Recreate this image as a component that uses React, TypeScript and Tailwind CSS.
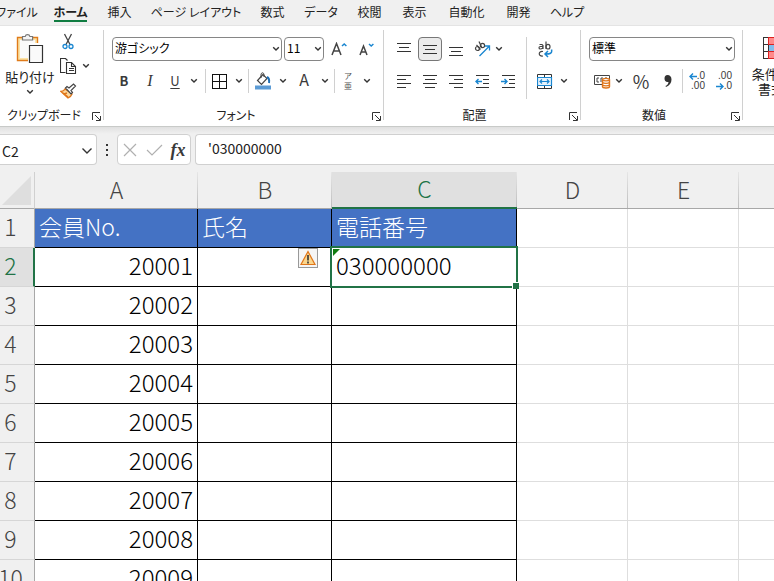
import type { ReactNode } from "react";

const palt = "[font-feature-settings:'palt']";

const tabs = [
  { name: "ファイル", size: "w-[34px]" },
  { name: "ホーム", size: "w-[33px]" },
  { name: "挿入", size: "w-[25px]" },
  { name: "ページ レイアウト", size: "w-[88px]" },
  { name: "数式", size: "w-[25px]" },
  { name: "データ", size: "w-[32px]" },
  { name: "校閲", size: "w-[25px]" },
  { name: "表示", size: "w-[25px]" },
  { name: "自動化", size: "w-[39px]" },
  { name: "開発", size: "w-[25px]" },
  { name: "ヘルプ", size: "w-[32px]" },
];

const members = [20001, 20002, 20003, 20004, 20005, 20006, 20007, 20008, 20009];

function Chevron({ className = "" }: { className?: string }) {
  return (
    <svg viewBox="0 0 8 6" className={`h-[6px] w-[8px] shrink-0 ${className}`} fill="none" stroke="#333" strokeWidth="1.4">
      <path d="M1.2 1.2 4 4l2.8-2.8" />
    </svg>
  );
}

function Tool({ label, className = "w-[26px]", children }: { label: string; className?: string; children: ReactNode }) {
  return (
    <button type="button" aria-label={label} className={`flex h-6 shrink-0 items-center justify-center text-[#3a3a3a] ${className}`}>
      {children}
    </button>
  );
}

function Divider() {
  return <div className="h-6 w-px shrink-0 bg-[#d0d0d0]" />;
}

function Picker({ label, value, className }: { label: string; value: string; className: string }) {
  return (
    <div className={`relative h-6 shrink-0 ${className}`}>
      <select
        aria-label={label}
        className={`block h-full w-full appearance-none rounded border border-[#868686] bg-white pb-[2px] pl-[2px] text-xs leading-4 text-black ${palt}`}
      >
        <option>{value}</option>
      </select>
      <Chevron className="pointer-events-none absolute top-[9px] right-[2px]" />
    </div>
  );
}

function Launcher({ label }: { label: string }) {
  return (
    <button type="button" aria-label={label} className="absolute right-[3px] bottom-[5px] size-[9px]">
      <svg viewBox="0 0 9 9" className="block size-[9px]" fill="none" stroke="#333" strokeWidth="1">
        <path d="M.5 8V.5H8M3 3l5 5M8.500 4v4.500H4" />
      </svg>
    </button>
  );
}

function Group({ title, className, children }: { title: string; className: string; children: ReactNode }) {
  return (
    <section className={`relative flex h-[100px] shrink-0 flex-col ${className}`}>
      <div className="h-[79px]">{children}</div>
      <h2 className={`pr-4 text-center text-xs leading-5 text-[#222] ${palt}`}>{title}</h2>
      <Launcher label={`${title}の設定`} />
      <div className="absolute top-1 right-0 h-[90px] w-px bg-[#d0d0d0]" />
    </section>
  );
}

function Lines({ rows }: { rows: [number, number, number][] }) {
  return (
    <svg viewBox="0 0 14 14" className="size-[14px]" shapeRendering="crispEdges" stroke="#333" strokeWidth="1">
      {rows.map(([x1, x2, y]) => (
        <path key={y} d={`M${x1} ${y + 0.5}H${x2}`} />
      ))}
    </svg>
  );
}

function Indent({ out }: { out?: boolean }) {
  return (
    <svg viewBox="0 0 15 14" className="h-[14px] w-[15px]" fill="none" stroke="#333">
      <path d="M1 1.500h13M8 5.500h6M8 9.500h6M1 13.500h13" shapeRendering="crispEdges" />
      <path d={out ? "M7 7.500H1M3.500 5 1 7.500 3.500 10" : "M0 7.500h6M3.500 5 6 7.500 3.500 10"} stroke="#1a86d0" strokeWidth="1.400" />
    </svg>
  );
}

function PasteIcon() {
  return (
    <svg viewBox="0 0 28 32" className="h-8 w-7" fill="none">
      <path d="M1.500 5.500h20v23h-20z" fill="#fbe3a6" stroke="#e07b1a" strokeWidth="1.400" />
      <path d="M4 8h15v18H4z" fill="#fafafa" />
      <path d="M6.500 8V4.500h2.700a2.400 2.400 0 0 1 4.700 0h2.700V8z" fill="#f5f5f5" stroke="#777" strokeWidth="1.200" />
      <path d="M12 11h16v20H12z" fill="#fff" />
      <path d="M13.500 13.500h13v17h-13z" fill="#fafafa" stroke="#333" strokeWidth="1.200" />
    </svg>
  );
}

function CutIcon() {
  return (
    <svg viewBox="0 0 12 17" className="h-[17px] w-3" fill="none">
      <path d="M2.500 1 8 11.500M9.500 1 4 11.500" stroke="#444" strokeWidth="1.300" />
      <circle cx="3" cy="13.500" r="2" stroke="#1a86d0" strokeWidth="1.300" />
      <circle cx="9" cy="13.500" r="2" stroke="#1a86d0" strokeWidth="1.300" />
    </svg>
  );
}

function CopyIcon() {
  return (
    <svg viewBox="0 0 17 17" className="size-[17px]" fill="none" stroke="#333" strokeWidth="1.100">
      <path d="M5.500 14.500h-5V.5h5l2 2" />
      <path d="M6.500 4.500h5l4 4v7h-9z" fill="#fff" />
      <path d="M11.500 4.500v4h4M9 10.500h5M9 12.500h5" />
    </svg>
  );
}

function BrushIcon() {
  return (
    <svg viewBox="0 0 17 16" className="h-4 w-[17px]" fill="none">
      <path d="M5 6C4 8 2 8.500 1 8.500L8 15c2-1 3.500-2.500 4-4z" fill="#fbd9a0" stroke="#e0761a" strokeWidth="1.300" />
      <path d="m3 10 5 4M7 10l-3 1" stroke="#e0761a" strokeWidth="1.600" />
      <path d="m5.500 5 1.500-1.500 2 1.500 4.500-4 2 2-4.500 4.500 1.500 2L11 11z" fill="#fff" stroke="#444" strokeWidth="1.200" />
    </svg>
  );
}

function BordersIcon() {
  return (
    <svg viewBox="0 0 15 15" className="size-[15px]" fill="none" stroke="#111" shapeRendering="crispEdges">
      <path d="M.5.5h14v14H.5zM7.500.5v14M.5 7.500h14" />
    </svg>
  );
}

function FillIcon() {
  return (
    <svg viewBox="0 0 16 18" className="h-[18px] w-4" fill="none">
      <path d="M8 2.500 2.500 8.500l4 4 5.500-6z" stroke="#444" strokeWidth="1.200" />
      <path d="M6 6V3c0-3 3-3 3 0v2" stroke="#444" />
      <path d="M12 5c2 1 2.500 3 2 6" stroke="#1f6fb5" strokeWidth="2" />
      <path d="M0 13.500h16V17.500H0z" fill="#5b9bd5" />
    </svg>
  );
}

function FontSize({ up }: { up?: boolean }) {
  return (
    <svg viewBox="0 0 16 14" className="h-[14px] w-4" fill="none">
      {up ? (
        <path d="M1 13 5.500 1.500 10 13M2.500 9h6" stroke="#444" strokeWidth="1.500" />
      ) : (
        <path d="M2 13 5.500 4 9 13M3 10h5" stroke="#444" strokeWidth="1.500" />
      )}
      <path d={up ? "m11 4 2.200-2 2.200 2" : "m11 2 2.200 2 2.200-2"} stroke="#1a86d0" strokeWidth="1.500" />
    </svg>
  );
}

function RotateIcon() {
  return (
    <svg viewBox="0 0 17 16" className="h-4 w-[17px]" fill="none">
      <g stroke="#444" strokeWidth="1.200">
        <circle cx="3.500" cy="7.500" r="2" />
        <path d="m2.500 4 4 4.500" />
        <circle cx="8.500" cy="4.500" r="2.100" />
        <path d="M5 .5 8 7" />
      </g>
      <path d="M5.500 15 15 5.500M11 5h4.500v4.500" stroke="#1a86d0" strokeWidth="1.300" />
    </svg>
  );
}

function WrapIcon() {
  return (
    <svg viewBox="0 0 15 17" className="h-[17px] w-[15px]" fill="none" strokeWidth="1.200">
      <g stroke="#444">
        <path d="M1.500 3.500h2.500l1 1V8M5 5.500H2.500C.5 5.500.5 8 2.500 8 4 8 5 7 5 6M8 .5V8" />
        <ellipse cx="10" cy="5.700" rx="2" ry="2.300" />
        <path d="M5 10.500c-5-1-5 5.500 0 4.500" />
      </g>
      <path d="M13.500 8.500c1 4-1.500 4.500-6 4.500M10 10l-3 3 3 3" stroke="#1a86d0" strokeWidth="1.500" />
    </svg>
  );
}

function MergeIcon() {
  return (
    <svg viewBox="0 0 16 15" className="h-[15px] w-4" fill="none">
      <path d="M.5.5h14v14H.5zM7.500.5v14" stroke="#333" />
      <path d="M.5 3.500h14v8H.5z" fill="#e8f3fc" stroke="#1a86d0" strokeWidth="1.200" />
      <path d="M3 7.500h9M5 5.500l-2 2 2 2M10 5.500l2 2-2 2" stroke="#1a86d0" strokeWidth="1.200" />
    </svg>
  );
}

function CurrencyIcon() {
  return (
    <svg viewBox="0 0 17 15" className="h-[15px] w-[17px]" fill="none">
      <path d="M.5 1.500h15v9H.5z" stroke="#444" />
      <path d="M5 4H3v4h2M7 8V4h2M11 6V4h2" stroke="#444" />
      <path d="M8.500 5.500c0-1.500 7-1.500 7 0v7c0 2-7 2-7 0z" fill="#fff" stroke="#e0761a" strokeWidth="1.400" />
      <path d="M8.500 6c1 1.200 6 1.200 7 0M8.500 8.500c1 1.200 6 1.200 7 0M8.500 11c1 1.200 6 1.200 7 0" stroke="#e0761a" strokeWidth="1.300" />
    </svg>
  );
}

function Decimals({ add }: { add?: boolean }) {
  return (
    <span className="relative flex h-5 w-4 flex-col items-end font-['Liberation_Sans',sans-serif] text-[10px] leading-[10px]">
      <span>{add ? ".0" : ".00"}</span>
      <span>{add ? ".00" : ".0"}</span>
      <svg
        viewBox="0 0 8 7"
        className={`absolute left-0 h-[7px] w-2 ${add ? "top-[2px]" : "bottom-[1px]"}`}
        fill="none"
        stroke="#1a86d0"
        strokeWidth="1.400"
      >
        <path d={add ? "M8 3.500H1M4 .5l-3 3 3 3" : "M0 3.500h7M4 .5l3 3-3 3"} />
      </svg>
    </span>
  );
}

function ConditionalIcon() {
  return (
    <svg viewBox="0 0 28 22" className="h-[22px] w-7" fill="none" shapeRendering="crispEdges">
      <path d="M5 1h14v6H5zM5 15h14v6H5z" fill="#ff8b8b" />
      <path d="M5 7h18v8H5z" fill="#83beec" />
      <path d="M.5.5h27v21H.5zM.5 7.500h27M.5 14.500h27M5.500.5v21" stroke="#333" />
      <path d="M5.500.5h14v7h-14zM5.500 14.500h14v7h-14z" stroke="#d22" />
    </svg>
  );
}

function Ribbon() {
  return (
    <div className="flex h-[102px] overflow-hidden border-t border-b border-t-[#e4e4e4] border-b-[#c8cac8] bg-white">
      <Group title="クリップボード" className="w-[104px]">
        <div className="flex pt-[3px]">
          <button type="button" className={`flex w-[60px] flex-col items-center pt-[3px] text-[13px] leading-[18px] text-[#222] ${palt}`}>
            <PasteIcon />
            <span className="pt-1">貼り付け</span>
            <Chevron className="mt-[3px]" />
          </button>
          <div className="flex flex-col">
            <Tool label="切り取り" className="w-4"><CutIcon /></Tool>
            <div className="flex h-[26px] items-center">
              <Tool label="コピー" className="w-[17px]"><CopyIcon /></Tool>
              <Tool label="コピーのオプション" className="ml-[5px] w-2"><Chevron /></Tool>
            </div>
            <Tool label="書式のコピー" className="w-[17px]"><BrushIcon /></Tool>
          </div>
        </div>
      </Group>

      <Group title="フォント" className="w-[280px]">
        <div className="flex gap-[2px] pt-[11px] pl-2">
          <Picker label="フォント名" value="游ゴシック" className="w-[170px]" />
          <Picker label="フォント サイズ" value="11" className="w-10" />
          <Tool label="フォント サイズの拡大"><FontSize up /></Tool>
          <Tool label="フォント サイズの縮小" className="w-6"><FontSize /></Tool>
        </div>
        <div className="flex items-center pt-2 pl-[7px]">
          <Tool label="太字"><span className="text-[13px] leading-6 font-bold">B</span></Tool>
          <Tool label="斜体"><span className="font-['Liberation_Serif',serif] text-base italic">I</span></Tool>
          <Tool label="下線" className="w-6"><span className="text-[13px] leading-6 underline underline-offset-2">U</span></Tool>
          <Tool label="下線の種類" className="w-[18px] pr-1"><Chevron /></Tool>
          <Divider />
          <Tool label="罫線" className="w-[27px]"><BordersIcon /></Tool>
          <Tool label="罫線の種類" className="w-[15px] pr-1"><Chevron /></Tool>
          <Divider />
          <Tool label="塗りつぶしの色" className="w-7"><FillIcon /></Tool>
          <Tool label="塗りつぶしの色の選択" className="w-3"><Chevron /></Tool>
          <Tool label="フォントの色" className="w-[30px] pb-1"><span className="text-base leading-5">A</span></Tool>
          <Tool label="フォントの色の選択" className="w-[15px] pr-1"><Chevron /></Tool>
          <Divider />
          <Tool label="ふりがなの表示">
            <span className="flex flex-col items-center text-[8px] leading-[10px] text-[#555]"><span>ア</span><span>亜</span></span>
          </Tool>
          <Tool label="ふりがなの設定" className="w-3"><Chevron /></Tool>
        </div>
      </Group>

      <Group title="配置" className="w-[197px]">
        <div className="flex pt-[11px] pl-[7px]">
          <div className="flex w-[135px] flex-col gap-2">
            <div className="flex">
              <Tool label="上揃え"><Lines rows={[[0, 14, 1], [2, 12, 5], [0, 14, 9]]} /></Tool>
              <button type="button" aria-label="上下中央揃え" aria-pressed="true" className="mx-px flex size-6 items-center justify-center rounded border border-[#777] bg-[#ebebeb]">
                <Lines rows={[[0, 14, 3], [2, 12, 7], [0, 14, 11]]} />
              </button>
              <Tool label="下揃え"><Lines rows={[[0, 14, 5], [2, 12, 9], [0, 14, 13]]} /></Tool>
              <Tool label="方向"><RotateIcon /></Tool>
              <Tool label="方向の選択" className="w-2"><Chevron /></Tool>
            </div>
            <div className="flex">
              <Tool label="左揃え"><Lines rows={[[0, 14, 1], [0, 9, 5], [0, 14, 9], [0, 9, 13]]} /></Tool>
              <Tool label="中央揃え"><Lines rows={[[0, 14, 1], [2, 12, 5], [0, 14, 9], [2, 12, 13]]} /></Tool>
              <Tool label="右揃え"><Lines rows={[[0, 14, 1], [5, 14, 5], [0, 14, 9], [5, 14, 13]]} /></Tool>
              <Tool label="インデントを減らす"><Indent out /></Tool>
              <Tool label="インデントを増やす"><Indent /></Tool>
            </div>
          </div>
          <div className="h-[62px] w-px bg-[#d0d0d0]" />
          <div className="flex flex-col gap-2 pl-[5px]">
            <Tool label="折り返して全体を表示する"><WrapIcon /></Tool>
            <div className="flex">
              <Tool label="セルを結合して中央揃え"><MergeIcon /></Tool>
              <Tool label="結合の種類" className="w-3"><Chevron /></Tool>
            </div>
          </div>
        </div>
      </Group>

      <Group title="数値" className="w-[162px]">
        <div className="pt-[11px] pl-2">
          <Picker label="表示形式" value="標準" className="w-[146px]" />
        </div>
        <div className="flex items-center pt-2 pl-2">
          <Tool label="通貨表示形式"><CurrencyIcon /></Tool>
          <Tool label="通貨の選択" className="w-2"><Chevron /></Tool>
          <Tool label="パーセント スタイル" className="w-9"><span className="text-lg leading-6">%</span></Tool>
          <Tool label="桁区切りスタイル" className="w-[23px] pr-[5px]">
            <svg viewBox="0 0 8 14" className="h-[14px] w-2" fill="#333"><path d="M3.500 1C5.800 1 7.500 2.500 7.500 5.500 7.500 9 5.500 11.500 2 13l-.5-1c2-1 3-2.500 3-4C2 8.500.5 7 .5 4.500.5 2.500 1.500 1 3.500 1z" /></svg>
          </Tool>
          <Divider />
          <Tool label="小数点以下の表示桁数を増やす" className="w-7"><Decimals add /></Tool>
          <Tool label="小数点以下の表示桁数を減らす"><Decimals /></Tool>
        </div>
      </Group>

      <button type="button" className={`ml-[9px] flex h-20 w-[50px] shrink-0 flex-col items-center pt-[11px] text-[13px] leading-[15px] whitespace-nowrap text-[#222] ${palt}`}>
        <ConditionalIcon />
        <span className="pt-[7px]">条件付き</span>
        <span className="flex items-center gap-1">書式<Chevron /></span>
      </button>
    </div>
  );
}

function FormulaBar() {
  return (
    <div className="flex h-[45px] bg-linear-to-b from-[#e0e0e0] to-[#f0f0f0] to-15% pt-[7px] text-sm text-[#222]">
      <div className="relative h-[31px] w-[97px]">
        <input aria-label="名前ボックス" defaultValue="C2" className="block h-full w-full rounded-r border border-l-0 border-[#d0d0d0] bg-white pt-[2px] pl-[2px]" />
        <svg viewBox="0 0 12 8" className="pointer-events-none absolute top-[13px] right-1 h-2 w-3" fill="none" stroke="#333" strokeWidth="1.400"><path d="m1.500 1.500 4.500 4.500 4.500-4.500" /></svg>
      </div>
      <div className="flex h-[31px] w-5 flex-col items-center justify-center gap-[3px]">
        <i className="size-[2px] bg-[#333]" /><i className="size-[2px] bg-[#333]" /><i className="size-[2px] bg-[#333]" />
      </div>
      <div className="flex h-[31px] w-[74px] items-center rounded border border-[#d0d0d0] bg-white">
        <Tool label="キャンセル" className="w-6">
          <svg viewBox="0 0 14 14" className="size-[14px]" fill="none" stroke="#b0b0b0" strokeWidth="1.200"><path d="m1 1 12 12M13 1 1 13" /></svg>
        </Tool>
        <Tool label="入力" className="w-6">
          <svg viewBox="0 0 17 12" className="h-3 w-[17px]" fill="none" stroke="#b0b0b0" strokeWidth="1.200"><path d="m1 6 5 5L16 1" /></svg>
        </Tool>
        <Tool label="関数の挿入" className="w-6">
          <span className="font-['Liberation_Serif',serif] text-lg leading-6 font-bold italic">fx</span>
        </Tool>
      </div>
      <input
        aria-label="数式バー"
        defaultValue="'030000000"
        className="ml-1 h-[31px] min-w-0 flex-1 rounded-l border border-r-0 border-[#d0d0d0] bg-white pb-1 pl-3"
      />
    </div>
  );
}

const columns = [
  { name: "A", size: "w-[163px]" },
  { name: "B", size: "w-[134px]" },
  { name: "C", size: "w-[185px]" },
  { name: "D", size: "w-[111px]" },
  { name: "E", size: "w-[111px]" },
  { name: "", size: "" },
];

function RowHead({ n, active }: { n: number; active?: boolean }) {
  return (
    <th
      scope="row"
      className={`h-[39px] border-b border-b-[#d6d6d6] p-0 pb-1 font-light ${
        active ? "border-r-2 border-r-[#217346] bg-[#e0e0e0] text-[#217346]" : "border-r border-r-[#a8a8a8] bg-[#f0f0f0] text-[#444]"
      }`}
    >
      <span className="flex w-[21px] justify-center">{n}</span>
    </th>
  );
}

function Blank() {
  return (
    <>
      <td className="border-r border-b border-[#dedede]" />
      <td className="border-r border-b border-[#dedede]" />
      <td className="border-b border-[#dedede]" />
    </>
  );
}

function Sheet() {
  const head = "border-r border-b border-black bg-[#4472c4] px-1 pt-0 pb-1 text-left font-light text-white";
  const cell = "border-r border-b border-black px-1 pt-0 pb-1 text-2xl leading-8";
  return (
    <table className="w-full table-fixed border-separate border-spacing-0 bg-white text-[23px] leading-8 font-light text-black">
      <thead>
        <tr className="bg-[#f0f0f0] text-[#444]">
          <th className="relative h-[37px] w-[35px] border-r border-b border-r-[#d0d0d0] border-b-[#a8a8a8] p-0">
            <svg viewBox="0 0 29 29" className="absolute right-[3px] bottom-[3px] size-[29px]" fill="#dedede"><path d="M29 0v29H0z" /></svg>
          </th>
          {columns.map((c) => (
            <th
              key={c.name}
              scope="col"
              className={`relative h-[37px] p-0 pb-[3px] font-light ${c.size} ${
                c.name === "C" ? "border-b-2 border-[#217346] bg-[#e0e0e0] text-[#217346]" : "border-b border-[#a8a8a8]"
              }`}
            >
              {c.name}
              {c.name && <i className="absolute top-0 right-0 h-full w-px bg-linear-to-b from-[#e6e6e6] to-[#bdbdbd]" />}
            </th>
          ))}
        </tr>
      </thead>
      <tbody>
        <tr>
          <RowHead n={1} />
          <td className={head}>会員No.</td>
          <td className={head}>氏名</td>
          <td className={head}>電話番号</td>
          <Blank />
        </tr>
        {members.map((id, i) => (
          <tr key={id}>
            <RowHead n={i + 2} active={i === 0} />
            <td className={`${cell} text-right`}>{id}</td>
            <td className={`${cell} relative`}>
              {i === 0 && (
                <button type="button" aria-label="エラー チェック オプション" className="absolute top-0 right-[13px] flex size-5 items-center justify-center border border-[#999] bg-[#f5f5f5]">
                  <svg viewBox="0 0 16 16" className="size-4" fill="none">
                    <path d="M8 1.500 15 14.500H1z" fill="#fbd68c" stroke="#e0761a" strokeWidth="1.200" />
                    <path d="M8 5v5.500M8 11.500v2" stroke="#333" strokeWidth="1.600" />
                  </svg>
                </button>
              )}
            </td>
            <td className={`${cell} relative`}>
              {i === 0 && (
                <>
                  030000000
                  <span className="absolute -inset-[2px] z-10 border-2 border-[#217346]" />
                  <svg viewBox="0 0 7 7" className="absolute top-px left-px size-[7px]" fill="#107c10"><path d="M0 0h7L0 7z" /></svg>
                  <span className="absolute -right-[3px] -bottom-[3px] z-20 size-[7px] border-t border-l border-white bg-[#217346]" />
                </>
              )}
            </td>
            <Blank />
          </tr>
        ))}
      </tbody>
    </table>
  );
}

export default function App() {
  return (
    <main className="h-screen overflow-hidden bg-[#f0f0f0] font-['Noto_Sans_CJK_JP',sans-serif]">
      <nav className={`flex h-[25px] gap-5 text-xs leading-6 text-[#222] ${palt}`}>
        {tabs.map((t) => (
          <button
            key={t.name}
            type="button"
            className={`flex h-[22px] shrink-0 justify-center whitespace-nowrap ${t.size} ${t.name === "ホーム" ? "border-b-2 border-[#107c41] font-bold" : ""}`}
          >
            {t.name}
          </button>
        ))}
      </nav>
      <Ribbon />
      <FormulaBar />
      <Sheet />
    </main>
  );
}
